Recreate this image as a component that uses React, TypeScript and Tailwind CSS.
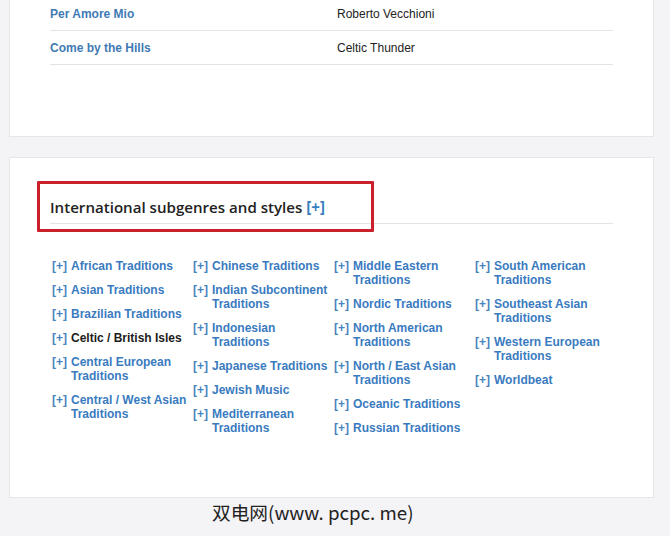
const songs = [
  { title: "Per Amore Mio", artist: "Roberto Vecchioni" },
  { title: "Come by the Hills", artist: "Celtic Thunder" },
];

const columns: { label: string; dark?: boolean }[][] = [
  [
    { label: "African Traditions" },
    { label: "Asian Traditions" },
    { label: "Brazilian Traditions" },
    { label: "Celtic / British Isles", dark: true },
    { label: "Central European Traditions" },
    { label: "Central / West Asian Traditions" },
  ],
  [
    { label: "Chinese Traditions" },
    { label: "Indian Subcontinent Traditions" },
    { label: "Indonesian Traditions" },
    { label: "Japanese Traditions" },
    { label: "Jewish Music" },
    { label: "Mediterranean Traditions" },
  ],
  [
    { label: "Middle Eastern Traditions" },
    { label: "Nordic Traditions" },
    { label: "North American Traditions" },
    { label: "North / East Asian Traditions" },
    { label: "Oceanic Traditions" },
    { label: "Russian Traditions" },
  ],
  [
    { label: "South American Traditions" },
    { label: "Southeast Asian Traditions" },
    { label: "Western European Traditions" },
    { label: "Worldbeat" },
  ],
];

export default function App() {
  return (
    <div className="w-[670px] h-[536px] overflow-hidden bg-[#f4f3f6] font-['Liberation_Sans',Arial,sans-serif]">
      {/* songs card, top cut off */}
      <div className="ml-[9px] w-[645px] -mt-px bg-white border border-[#e6e5ea] px-10 pb-[71px]">
        <div className="-mt-[3px]">
          {songs.map((s) => (
            <div key={s.title} className="flex items-center h-[34px] border-b border-[#e3e3e6] text-[12px]">
              <span className="w-[287px] text-[#3f7bb3] font-bold">{s.title}</span>
              <span className="text-[#222]">{s.artist}</span>
            </div>
          ))}
        </div>
      </div>

      {/* subgenres card */}
      <div className="relative ml-[9px] mt-[20px] w-[645px] h-[341px] bg-white border border-[#e6e5ea] px-10 pt-[39px]">
        <div className="border-b border-[#e4e4e6] pb-[6px]">
          <h2 className="text-[15.1px] leading-5 font-semibold text-[#222] font-['Open_Sans',sans-serif]">
            International subgenres and styles <span className="text-[#3a80c0] font-bold">[+]</span>
          </h2>
        </div>

        <div className="absolute left-[27px] top-[23px] w-[337px] h-[51px] border-[3px] border-[#c9202c] rounded-[1px]" />

        <div className="grid grid-cols-[repeat(4,141px)] mt-[35px] pl-[2px]">
          {columns.map((col, i) => (
            <ul key={i} className="flex flex-col gap-[10px]">
              {col.map((item) => (
                <li key={item.label} className="flex text-[12px] leading-[14px] font-bold">
                  <span className="shrink-0 w-[19px] text-[#4a84bd]">[+]</span>
                  <span className={item.dark ? "text-[#1c1c1c]" : "text-[#3a7bbf]"}>{item.label}</span>
                </li>
              ))}
            </ul>
          ))}
        </div>
      </div>

      <div className="mt-[2px] pl-[212px] text-[18.7px] leading-6 text-[#222] font-['Noto_Sans_CJK_SC',sans-serif]">
        双电网(www. pcpc. me)
      </div>
    </div>
  );
}
